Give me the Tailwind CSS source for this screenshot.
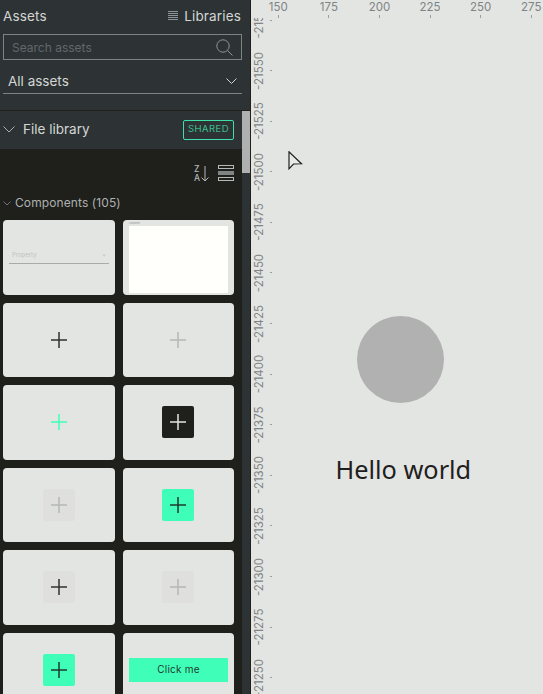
<!DOCTYPE html>
<html>
<head>
<meta charset="utf-8">
<script src="https://cdn.jsdelivr.net/npm/@tailwindcss/browser@4"></script>
</head>
<body class="m-0 overflow-hidden bg-[#e3e5e3]">
<div class="flex h-[694px] w-[543px] overflow-hidden font-['Inter','Liberation_Sans',sans-serif]">
  <aside class="flex h-full w-[250px] shrink-0 flex-col bg-[#2d3335]">
    <div class="flex h-[34px] shrink-0 items-start justify-between pl-[3px] pr-[9px] pt-[7px] text-[13.5px] leading-[18px] tracking-[0.15px] text-[#d4d6d4]">
      <span>Assets</span>
      <span class="flex items-center gap-[6px]">
        <svg width="10" height="10" viewBox="0 0 10 10" stroke="#8f9494" stroke-width="1"><path d="M0 .5h10M0 2.500h10M0 4.500h10M0 6.500h10M0 8.500h10"/></svg>
        Libraries
      </span>
    </div>
    <div class="ml-[3px] flex h-[26px] w-[239px] shrink-0 items-center justify-between border border-[#7d8282] pl-2 pr-[8px] text-[12px] text-[#62686a]">
      <span class="pt-[1px]">Search assets</span>
      <svg width="17" height="17" viewBox="0 0 17 17" fill="none" stroke="#8f9494" stroke-width="1"><circle cx="7" cy="7" r="6.200"/><path d="M11.500 11.500l5 5"/></svg>
    </div>
    <div class="ml-[3px] mt-[10px] flex h-[24px] w-[239px] shrink-0 items-center justify-between border-b border-[#7d8282] pb-[1px] pl-[5px] pr-[5px] text-[13.5px] text-[#d4d6d4]">
      <span>All assets</span>
      <svg width="11" height="7" viewBox="0 0 11 7" fill="none" stroke="#d4d6d4" stroke-width="1"><path d="M.5 .5l5 5 5-5"/></svg>
    </div>
    <div class="mt-[16px] h-px shrink-0 bg-[#1f201c]"></div>
    <div class="flex min-h-0 flex-1">
      <div class="flex w-[242px] shrink-0 flex-col">
        <div class="flex h-[38px] shrink-0 items-center justify-between pb-[1px] pl-[3px] pr-[8px] text-[13.5px] text-[#d4d6d4]">
          <span class="flex items-center gap-[8px]">
            <svg width="12" height="7" viewBox="0 0 12 7" fill="none" stroke="#aab0b0" stroke-width="1"><path d="M.5 .5l5.500 5.500 5.500-5.500"/></svg>
            File library
          </span>
          <span class="flex h-[20px] w-[51px] items-center justify-center rounded-[2px] border border-[#3fe0a8] text-[9.500px] font-light tracking-[0.5px] text-[#3fe0a8]">SHARED</span>
        </div>
        <div class="flex min-h-0 flex-1 flex-col bg-[#1f201c]">
          <div class="flex h-[40px] shrink-0 items-center justify-end gap-[7px] pr-[7px] pt-[9px]">
            <span class="flex h-[17px] w-[17px] items-center text-[8.500px] font-medium leading-[9px] text-[#b4b8b8]">
              <span class="flex flex-col"><span>Z</span><span>A</span></span>
              <svg class="ml-[1px]" width="8" height="16" viewBox="0 0 8 16" fill="none" stroke="#b4b8b8" stroke-width="1"><path d="M4 0v15M.5 11.500L4 15l3.500-3.500"/></svg>
            </span>
            <svg width="17" height="17" viewBox="0 0 17 17" fill="none"><rect x=".5" y=".5" width="15" height="3" stroke="#b4b8b8"/><rect x="0" y="6" width="16" height="4" fill="#7f8484"/><rect x=".5" y="12.500" width="15" height="3" stroke="#b4b8b8"/></svg>
          </div>
          <div class="flex h-[26px] shrink-0 items-center gap-[4px] pl-[3px] pt-[2px] text-[12px] tracking-[0.1px] text-[#adb1b0]">
            <svg width="8" height="5" viewBox="0 0 8 5" fill="none" stroke="#6d7272" stroke-width="1"><path d="M.5 .5l3.500 3.500 3.500-3.500"/></svg>
            Components (105)
          </div>
          <div class="ml-[3px] mt-[5px] grid grid-cols-[112px_111px] auto-rows-[74.5px] gap-x-[8px] gap-y-[8px]">
            <div class="flex items-center rounded-[4px] bg-[#e3e5e3] px-[6px] pb-[2px]">
              <div class="flex h-[16px] w-full flex-col justify-end border-b border-[#a7abaa] pb-[5px] pl-[3px] text-[6px] leading-[7px] text-[#c0c3c1]">
                <div class="flex items-center justify-between pr-[3px]"><span>Property</span><span>+</span></div>
              </div>
            </div>
            <div class="flex flex-col rounded-[4px] bg-[#e3e5e3] px-[6px]">
              <div class="flex h-[6px] items-center text-[2px] leading-[2px] text-[#8f9392]">Component</div>
              <div class="h-[67px] bg-[#fffffb]"></div>
            </div>
            <div class="flex items-center justify-center rounded-[4px] bg-[#e3e5e3]"><svg width="16" height="16" viewBox="0 0 16 16" stroke="#303232" stroke-width="1.500"><path d="M8 0v16M0 8h16"/></svg></div>
            <div class="flex items-center justify-center rounded-[4px] bg-[#e3e5e3] pr-px"><svg width="16" height="16" viewBox="0 0 16 16" stroke="#b4b7b6" stroke-width="1.500"><path d="M8 0v16M0 8h16"/></svg></div>
            <div class="flex items-center justify-center rounded-[4px] bg-[#e3e5e3]"><svg width="16" height="16" viewBox="0 0 16 16" stroke="#3fffb8" stroke-width="1.500"><path d="M8 0v16M0 8h16"/></svg></div>
            <div class="flex items-center justify-center rounded-[4px] bg-[#e3e5e3] pr-px"><div class="flex h-8 w-8 items-center justify-center rounded-[2px] bg-[#1f201c]"><svg width="16" height="16" viewBox="0 0 16 16" stroke="#e3e5e3" stroke-width="1.500"><path d="M8 0v16M0 8h16"/></svg></div></div>
            <div class="flex items-center justify-center rounded-[4px] bg-[#e3e5e3]"><div class="flex h-8 w-8 items-center justify-center rounded-[2px] bg-[#dfe0de]"><svg width="16" height="16" viewBox="0 0 16 16" stroke="#b4b7b6" stroke-width="1.500"><path d="M8 0v16M0 8h16"/></svg></div></div>
            <div class="flex items-center justify-center rounded-[4px] bg-[#e3e5e3] pr-px"><div class="flex h-8 w-8 items-center justify-center rounded-[2px] bg-[#3fffb8]"><svg width="16" height="16" viewBox="0 0 16 16" stroke="#1f3a30" stroke-width="1.500"><path d="M8 0v16M0 8h16"/></svg></div></div>
            <div class="flex items-center justify-center rounded-[4px] bg-[#e3e5e3]"><div class="flex h-8 w-8 items-center justify-center rounded-[2px] bg-[#dfe0de]"><svg width="16" height="16" viewBox="0 0 16 16" stroke="#303232" stroke-width="1.500"><path d="M8 0v16M0 8h16"/></svg></div></div>
            <div class="flex items-center justify-center rounded-[4px] bg-[#e3e5e3] pr-px"><div class="flex h-8 w-8 items-center justify-center rounded-[2px] bg-[#dfe0de]"><svg width="16" height="16" viewBox="0 0 16 16" stroke="#b4b7b6" stroke-width="1.500"><path d="M8 0v16M0 8h16"/></svg></div></div>
            <div class="flex items-center justify-center rounded-[4px] bg-[#e3e5e3]"><div class="flex h-8 w-8 items-center justify-center rounded-[2px] bg-[#3fffb8]"><svg width="16" height="16" viewBox="0 0 16 16" stroke="#1f3a30" stroke-width="1.500"><path d="M8 0v16M0 8h16"/></svg></div></div>
            <div class="flex items-center justify-center rounded-[4px] bg-[#e3e5e3] px-[6px]"><div class="flex h-[24px] w-full items-center justify-center bg-[#3fffb8] text-[10px] tracking-[0.2px] text-[#1f3a30]">Click me</div></div>
          </div>
        </div>
      </div>
      <div class="w-[8px] shrink-0"><div class="h-[62px] bg-[#aeb1af]"></div></div>
    </div>
  </aside>
  <div class="h-full w-px shrink-0 bg-[#1f201c]"></div>
  <main class="relative flex-1 overflow-hidden bg-[#e3e5e3]">
    <!-- top ruler -->
    <div class="absolute left-[2px] top-0 flex text-[11.500px] leading-[14px] text-[#7f8483]">
      <div class="flex w-[50.600px] flex-col items-center"><span>150</span><span class="mt-[1px] h-[3px] w-px bg-[#9a9e9d]"></span></div>
      <div class="flex w-[50.600px] flex-col items-center"><span>175</span><span class="mt-[1px] h-[3px] w-px bg-[#9a9e9d]"></span></div>
      <div class="flex w-[50.600px] flex-col items-center"><span>200</span><span class="mt-[1px] h-[3px] w-px bg-[#9a9e9d]"></span></div>
      <div class="flex w-[50.600px] flex-col items-center"><span>225</span><span class="mt-[1px] h-[3px] w-px bg-[#9a9e9d]"></span></div>
      <div class="flex w-[50.600px] flex-col items-center"><span>250</span><span class="mt-[1px] h-[3px] w-px bg-[#9a9e9d]"></span></div>
      <div class="flex w-[50.600px] flex-col items-center"><span>275</span><span class="mt-[1px] h-[3px] w-px bg-[#9a9e9d]"></span></div>
    </div>
    <!-- left ruler, clipped under the top ruler -->
    <div class="absolute bottom-0 left-0 top-[18px] w-[22px] overflow-hidden text-[11.500px] text-[#7f8483]">
      <div class="mt-[-23.300px] flex flex-col">
        <div class="relative flex h-[50.600px] w-[21px] items-center justify-end"><span class="absolute left-[2px] top-[18.300px] flex h-[14px] w-[14px] -rotate-90 items-center justify-center whitespace-nowrap">-21575</span><span class="h-px w-[2px] bg-[#9a9e9d]"></span></div>
        <div class="relative flex h-[50.600px] w-[21px] items-center justify-end"><span class="absolute left-[2px] top-[18.300px] flex h-[14px] w-[14px] -rotate-90 items-center justify-center whitespace-nowrap">-21550</span><span class="h-px w-[2px] bg-[#9a9e9d]"></span></div>
        <div class="relative flex h-[50.600px] w-[21px] items-center justify-end"><span class="absolute left-[2px] top-[18.300px] flex h-[14px] w-[14px] -rotate-90 items-center justify-center whitespace-nowrap">-21525</span><span class="h-px w-[2px] bg-[#9a9e9d]"></span></div>
        <div class="relative flex h-[50.600px] w-[21px] items-center justify-end"><span class="absolute left-[2px] top-[18.300px] flex h-[14px] w-[14px] -rotate-90 items-center justify-center whitespace-nowrap">-21500</span><span class="h-px w-[2px] bg-[#9a9e9d]"></span></div>
        <div class="relative flex h-[50.600px] w-[21px] items-center justify-end"><span class="absolute left-[2px] top-[18.300px] flex h-[14px] w-[14px] -rotate-90 items-center justify-center whitespace-nowrap">-21475</span><span class="h-px w-[2px] bg-[#9a9e9d]"></span></div>
        <div class="relative flex h-[50.600px] w-[21px] items-center justify-end"><span class="absolute left-[2px] top-[18.300px] flex h-[14px] w-[14px] -rotate-90 items-center justify-center whitespace-nowrap">-21450</span><span class="h-px w-[2px] bg-[#9a9e9d]"></span></div>
        <div class="relative flex h-[50.600px] w-[21px] items-center justify-end"><span class="absolute left-[2px] top-[18.300px] flex h-[14px] w-[14px] -rotate-90 items-center justify-center whitespace-nowrap">-21425</span><span class="h-px w-[2px] bg-[#9a9e9d]"></span></div>
        <div class="relative flex h-[50.600px] w-[21px] items-center justify-end"><span class="absolute left-[2px] top-[18.300px] flex h-[14px] w-[14px] -rotate-90 items-center justify-center whitespace-nowrap">-21400</span><span class="h-px w-[2px] bg-[#9a9e9d]"></span></div>
        <div class="relative flex h-[50.600px] w-[21px] items-center justify-end"><span class="absolute left-[2px] top-[18.300px] flex h-[14px] w-[14px] -rotate-90 items-center justify-center whitespace-nowrap">-21375</span><span class="h-px w-[2px] bg-[#9a9e9d]"></span></div>
        <div class="relative flex h-[50.600px] w-[21px] items-center justify-end"><span class="absolute left-[2px] top-[18.300px] flex h-[14px] w-[14px] -rotate-90 items-center justify-center whitespace-nowrap">-21350</span><span class="h-px w-[2px] bg-[#9a9e9d]"></span></div>
        <div class="relative flex h-[50.600px] w-[21px] items-center justify-end"><span class="absolute left-[2px] top-[18.300px] flex h-[14px] w-[14px] -rotate-90 items-center justify-center whitespace-nowrap">-21325</span><span class="h-px w-[2px] bg-[#9a9e9d]"></span></div>
        <div class="relative flex h-[50.600px] w-[21px] items-center justify-end"><span class="absolute left-[2px] top-[18.300px] flex h-[14px] w-[14px] -rotate-90 items-center justify-center whitespace-nowrap">-21300</span><span class="h-px w-[2px] bg-[#9a9e9d]"></span></div>
        <div class="relative flex h-[50.600px] w-[21px] items-center justify-end"><span class="absolute left-[2px] top-[18.300px] flex h-[14px] w-[14px] -rotate-90 items-center justify-center whitespace-nowrap">-21275</span><span class="h-px w-[2px] bg-[#9a9e9d]"></span></div>
        <div class="relative flex h-[50.600px] w-[21px] items-center justify-end"><span class="absolute left-[2px] top-[18.300px] flex h-[14px] w-[14px] -rotate-90 items-center justify-center whitespace-nowrap">-21250</span><span class="h-px w-[2px] bg-[#9a9e9d]"></span></div>
      </div>
    </div>
    <!-- cursor -->
    <svg class="absolute left-[37px] top-[151px]" width="15" height="19" viewBox="0 0 15 19" fill="#e8eae8" stroke="#1f201c" stroke-width="1.200"><path d="M1 .8v17l4.500-4.800 8-.2z"/></svg>
    <!-- canvas shapes -->
    <div class="absolute left-[106px] top-[316px] h-[87px] w-[87px] rounded-full bg-[#b1b1b1]"></div>
    <div class="absolute left-[84.500px] top-[452px] font-['Noto_Sans',sans-serif] text-[25.300px] leading-[34px] text-[#1f201c]">Hello world</div>
  </main>
</div>
</body>
</html>
